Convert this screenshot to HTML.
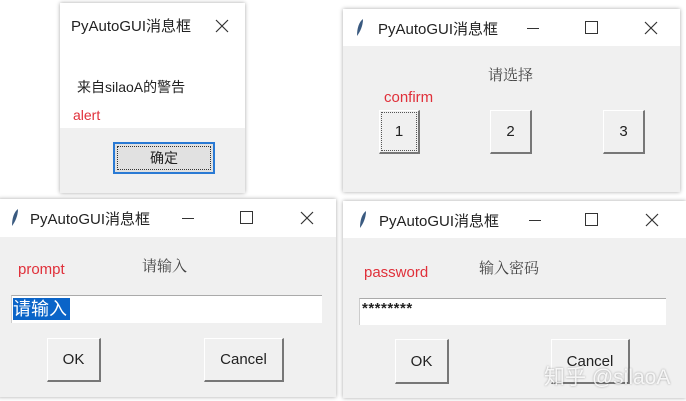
<!DOCTYPE html>
<html><head><meta charset="utf-8"><style>
*{margin:0;padding:0;box-sizing:border-box}
body{width:686px;height:401px;background:#fff;position:relative;overflow:hidden;font-family:"Liberation Sans","Noto Sans CJK SC",sans-serif;color:#222}
.a{position:absolute}
.win{position:absolute;background:#f0f0f0;box-shadow:0 0 4px rgba(0,0,0,.35)}
.tb{position:absolute;left:0;right:0;top:0;background:#fff}
.t{position:absolute;font-size:15px;white-space:nowrap}
.red{color:#e0303a;font-size:14px}
.btn{position:absolute;background:#f0f0f0;border:1px solid #fff;border-right:2px solid #777;border-bottom:2px solid #777;font-size:15px;display:flex;align-items:center;justify-content:center}
.inp{position:absolute;background:#fff;border-top:1px solid #aaa;border-left:1px solid #ccc}
.lbl{font-size:15px;color:#444;font-family:"Noto Serif CJK SC","Liberation Sans",serif}
</style></head><body>

<!-- window 1 -->
<div class="win" style="left:60px;top:3px;width:185px;height:190px">
<div class="tb" style="height:125px"></div>
<div class="t" style="left:11px;top:12px">PyAutoGUI消息框</div>
<svg class="a" style="left:154px;top:15px" width="16" height="16"><path d="M2 2L14 14M14 2L2 14" stroke="#333" stroke-width="1.2"/></svg>
<div class="t" style="left:17px;top:74px;font-size:14px">来自silaoA的警告</div>
<div class="t red" style="left:13px;top:104px">alert</div>
<div class="a" style="left:53px;top:139px;width:102px;height:32px;background:#e1e1e1;border:2px solid #2a7ad4;font-size:14px;display:flex;align-items:center;justify-content:center"><span style="border:1px dotted #333;width:94px;height:24px;display:flex;align-items:center;justify-content:center">确定</span></div>
</div>

<!-- window 2 -->
<div class="win" style="left:343px;top:9px;width:337px;height:183px">
<div class="tb" style="height:37px"></div>
<svg class="a" style="left:12px;top:9px" width="10" height="20"><path d="M8 1C4 4 2 10 2 18C5 14 8 8 8 1Z" fill="#3a5a80"/></svg>
<div class="t" style="left:35px;top:9px">PyAutoGUI消息框</div>
<div class="a" style="left:184px;top:19px;width:12px;height:1px;background:#333"></div>
<div class="a" style="left:242px;top:12px;width:13px;height:13px;border:1px solid #333"></div>
<svg class="a" style="left:300px;top:11px" width="16" height="16"><path d="M2 2L14 14M14 2L2 14" stroke="#333" stroke-width="1.2"/></svg>
<div class="t lbl" style="left:145px;top:55px">请选择</div>
<div class="t red" style="left:41px;top:80px;font-size:15px">confirm</div>
<div class="btn" style="left:36px;top:101px;width:41px;height:44px"><span style="border:1px dotted #555;width:36px;height:39px;display:flex;align-items:center;justify-content:center">1</span></div>
<div class="btn" style="left:147px;top:101px;width:42px;height:44px">2</div>
<div class="btn" style="left:260px;top:101px;width:42px;height:44px">3</div>
</div>

<!-- window 3 -->
<div class="win" style="left:-2px;top:199px;width:338px;height:198px">
<div class="tb" style="height:38px"></div>
<svg class="a" style="left:12px;top:9px" width="10" height="20"><path d="M8 1C4 4 2 10 2 18C5 14 8 8 8 1Z" fill="#3a5a80"/></svg>
<div class="t" style="left:32px;top:9px">PyAutoGUI消息框</div>
<div class="a" style="left:184px;top:19px;width:12px;height:1px;background:#333"></div>
<div class="a" style="left:242px;top:12px;width:13px;height:13px;border:1px solid #333"></div>
<svg class="a" style="left:301px;top:11px" width="16" height="16"><path d="M2 2L14 14M14 2L2 14" stroke="#333" stroke-width="1.2"/></svg>
<div class="t red" style="left:20px;top:62px;font-size:15px">prompt</div>
<div class="t lbl" style="left:144px;top:56px">请输入</div>
<div class="inp" style="left:13px;top:96px;width:311px;height:28px"><span style="position:absolute;left:1px;top:2px;background:#0a64c8;color:#fff;font-size:18px;line-height:22px;padding-right:3px">请输入</span></div>
<div class="btn" style="left:49px;top:139px;width:54px;height:44px">OK</div>
<div class="btn" style="left:206px;top:139px;width:80px;height:44px">Cancel</div>
</div>

<!-- window 4 -->
<div class="win" style="left:343px;top:201px;width:343px;height:197px">
<div class="tb" style="height:37px"></div>
<svg class="a" style="left:15px;top:9px" width="10" height="20"><path d="M8 1C4 4 2 10 2 18C5 14 8 8 8 1Z" fill="#3a5a80"/></svg>
<div class="t" style="left:36px;top:9px">PyAutoGUI消息框</div>
<div class="a" style="left:186px;top:19px;width:12px;height:1px;background:#333"></div>
<div class="a" style="left:242px;top:12px;width:13px;height:13px;border:1px solid #333"></div>
<svg class="a" style="left:301px;top:11px" width="16" height="16"><path d="M2 2L14 14M14 2L2 14" stroke="#333" stroke-width="1.2"/></svg>
<div class="t red" style="left:21px;top:63px;font-size:15px">password</div>
<div class="t lbl" style="left:136px;top:56px">输入密码</div>
<div class="inp" style="left:16px;top:97px;width:307px;height:27px"><span style="position:absolute;left:2px;top:1px;font-size:15px;letter-spacing:0.5px;font-weight:bold">********</span></div>
<div class="btn" style="left:52px;top:138px;width:54px;height:45px">OK</div>
<div class="btn" style="left:208px;top:138px;width:79px;height:45px">Cancel</div>
<div class="t" style="left:201px;top:160px;font-size:21px;color:rgba(255,255,255,.85);text-shadow:0 0 2px rgba(0,0,0,.35)">知乎 @silaoA</div>
</div>

</body></html>
